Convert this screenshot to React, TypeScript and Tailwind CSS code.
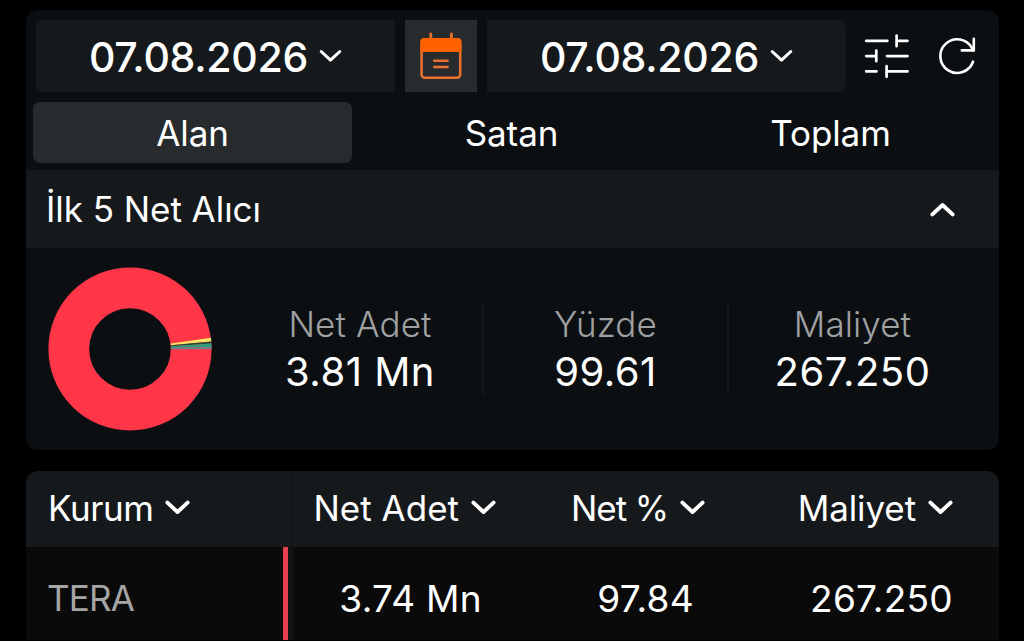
import { ReactNode } from "react";
import clsx from "clsx";

type ChevronProps = {
    up?: boolean;
    small?: boolean;
}

const Chevron = ({ up, small }: ChevronProps) => (
    <svg width={small ? 23 : 25} height={small ? 14 : 15} viewBox="0 0 25 15" fill="none" stroke="#fff" strokeWidth={small ? 3.3 : 3.9} strokeLinecap="round" strokeLinejoin="round" className={clsx("shrink-0", up && "rotate-180")}>
        <path d="M2.4 2.6 12.5 12 22.6 2.6" />
    </svg>
);

const CalendarIcon = () => (
    <svg width="42" height="48" viewBox="0 0 42 48" fill="none" stroke="#e8702e">
        <path d="M10.8 2V8M31.4 2V8" strokeWidth="2.8" strokeLinecap="round" />
        <rect x="1.6" y="7.2" width="38.6" height="38.6" rx="3.2" strokeWidth="2.6" />
        <path d="M.4 20V9.5a3.6 3.6 0 0 1 3.6-3.6h33.8a3.6 3.6 0 0 1 3.6 3.6V20z" fill="#ff6000" stroke="none" />
        <path d="M13.2 28.7h15.4M13.2 35h15.4" strokeWidth="2.5" />
    </svg>
);

const FilterIcon = () => (
    <svg width="46" height="46" viewBox="0 0 46 46" fill="none" stroke="#fff" strokeWidth="2.7" strokeLinecap="round">
        <path d="M3.2 7.8h21.2M33.6 7.8h10.9M33.6 2.6v10.6" />
        <path d="M3.2 23.1h9.6M13.3 17.6v10.6M24 23.1h20.5" />
        <path d="M3.2 38.4h10.3M23.6 33.2v10.6M23.6 38.4h20.9" />
    </svg>
);

const RefreshIcon = () => (
    <svg width="38" height="38" viewBox="0 0 38 38" fill="none" stroke="#fff" strokeWidth="2.6" strokeLinecap="round" strokeLinejoin="round">
        <path d="M35 24.7A16.8 16.8 0 1 1 34 11.2L35.4 13.2" />
        <path d="M35.8 1.8V13.4H23.8" />
    </svg>
);

const Donut = () => (
    <svg width="164" height="164" viewBox="-82 -82 164 164" className="shrink-0">
        <circle r="61.2" fill="none" stroke="#ff3548" strokeWidth="40.8" />
        <path d="M40.7 -5.6L80.9 -11.2L81.4 -7.6L40.9 -3.8z" fill="#fbe267" />
        <path d="M40.9 -3.8L81.4 -7.6L81.5 -5.4L41 -2.8z" fill="#1f4a3c" />
        <path d="M41 -2.8L81.5 -5.4L81.6 -1.9L41 -1z" fill="#2f9c7a" />
        <path d="M41 -1.2L81.6 -2L81.6 .2L41 .2z" fill="#76808a" />
    </svg>
);

const DateBox = ({ value, className }: { value: string; className: string }) => (
    <div className={clsx("flex h-[72px] items-center bg-[#16191c] pl-[53px]", className)}>
        <span className="w-[230px] pt-px text-[41px] leading-[72px] font-medium tracking-[-0.3px]">{value}</span>
        <Chevron small />
    </div>
);

type StatProps = {
    label: string;
    value: string;
    className: string;
}

const Stat = ({ label, value, className }: StatProps) => (
    <div className={clsx("flex h-[93px] flex-col items-center", className)}>
        <div className="text-[35px] leading-[42px] font-light tracking-[0.1px] text-[#a0a1a3]">{label}</div>
        <div className="mt-[3px] text-[40px] leading-[48px] tracking-[0.5px]">{value}</div>
    </div>
);

const HeadCell = ({ children, className }: { children: ReactNode; className?: string }) => (
    <div className={clsx("flex h-[76px] items-center bg-[#16191c] pb-[3px] text-[35px] leading-[42px]", className)}>
        {children}
        <Chevron />
    </div>
);

const tabs = ["Alan", "Satan", "Toplam"];

const App = () => {
    return (
        <div className="h-[641px] w-[1024px] overflow-hidden bg-black pt-[10px] pl-[26px] font-['Inter',sans-serif] whitespace-nowrap text-white">
            <div className="h-[440px] w-[973px] overflow-hidden rounded-[12px] bg-[#0c0f12]">
                <div className="flex h-[82px] items-center pt-[10px] pl-[10px]">
                    <DateBox value="07.08.2026" className="w-[359px] rounded-l-[7px]" />
                    <div className="mx-[10px] flex h-[72px] w-[72px] items-center justify-center bg-[#282b2d]">
                        <CalendarIcon />
                    </div>
                    <DateBox value="07.08.2026" className="w-[359px] rounded-r-[7px]" />
                    <div className="flex items-center gap-[29px] pl-[17px]">
                        <FilterIcon />
                        <RefreshIcon />
                    </div>
                </div>
                <div className="mt-[10px] ml-[7px] flex h-[61px] w-[957px]">
                    {tabs.map((tab, i) => (
                        <div key={tab} className={clsx("w-[319px] rounded-[7px] text-center text-[35px] leading-[62px] tracking-[-0.1px]", i == 0 && "bg-[#282b2d]")}>
                            {tab}
                        </div>
                    ))}
                </div>
                <div className="mt-[7px] flex h-[78px] items-center justify-between bg-[#16191c] pr-[44px] pl-[20px]">
                    <span className="text-[35px] leading-[42px] tracking-[-0.05px]">İlk 5 Net Alıcı</span>
                    <Chevron up />
                </div>
                <div className="flex h-[202px] items-center pl-[22px]">
                    <Donut />
                    <div className="ml-[26px] flex">
                        <Stat label="Net Adet" value="3.81 Mn" className="w-[244px]" />
                        <Stat label="Yüzde" value="99.61" className="w-[247px] border-x-2 border-[#14171a]" />
                        <Stat label="Maliyet" value="267.250" className="w-[247px]" />
                    </div>
                </div>
            </div>
            <div className="mt-[21px] h-[169px] w-[973px] overflow-hidden rounded-t-[12px] bg-[#0a0a0a]">
                <div className="flex">
                    <HeadCell className="w-[267px] gap-[11px] border-r-[3px] border-[#131619] pl-[22px] tracking-[-0.4px]">Kurum</HeadCell>
                    <HeadCell className="w-[209px] justify-end gap-[12px] pr-[6px]">Net Adet</HeadCell>
                    <HeadCell className="w-[210px] justify-end gap-[12px] pr-[7px] tracking-[-1.1px]">Net %</HeadCell>
                    <HeadCell className="w-[287px] justify-end gap-[12px] pr-[46px] tracking-[-0.1px]">Maliyet</HeadCell>
                </div>
                <div className="flex h-[102px] text-[37px] leading-[103px]">
                    <div className="w-[262px] border-r-[5px] border-[#e63f52] pl-[21px] text-[35px] tracking-[-0.8px] text-[#a5a5a5]">TERA</div>
                    <div className="w-[5px] bg-[#121414]" />
                    <div className="w-[189px] text-right tracking-[0.3px]">3.74 Mn</div>
                    <div className="w-[212px] text-right tracking-[0.3px]">97.84</div>
                    <div className="w-[259px] text-right tracking-[0.3px]">267.250</div>
                </div>
            </div>
        </div>
    );
}

export default App;
